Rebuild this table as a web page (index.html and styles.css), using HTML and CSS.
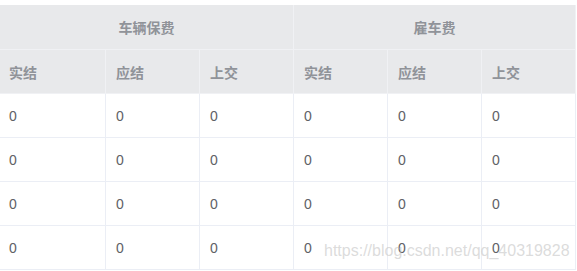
FILE: index.html
```html
<!DOCTYPE html>
<html lang="zh">
<head>
<meta charset="utf-8">
<link rel="stylesheet" href="styles.css">
</head>
<body>
<div class="wrap">
  <table class="grid">
    <colgroup>
      <col class="c-first">
      <col class="c"><col class="c"><col class="c"><col class="c"><col class="c">
    </colgroup>
    <thead>
      <tr class="head-top">
        <th colspan="3" class="group">车辆保费</th>
        <th colspan="3" class="group">雇车费</th>
      </tr>
      <tr class="head-sub">
        <th class="first">实结</th><th>应结</th><th>上交</th>
        <th>实结</th><th>应结</th><th>上交</th>
      </tr>
    </thead>
    <tbody>
      <tr><td class="first">0</td><td>0</td><td>0</td><td>0</td><td>0</td><td>0</td></tr>
      <tr><td class="first">0</td><td>0</td><td>0</td><td>0</td><td>0</td><td>0</td></tr>
      <tr><td class="first">0</td><td>0</td><td>0</td><td>0</td><td>0</td><td>0</td></tr>
      <tr><td class="first">0</td><td>0</td><td>0</td><td>0</td><td>0</td><td>0</td></tr>
    </tbody>
  </table>
  <div class="watermark">https://blog.csdn.net/qq_40319828</div>
</div>
</body>
</html>
```

FILE: styles.css
```css
html, body {
  margin: 0;
  padding: 0;
  background: #ffffff;
}
.wrap {
  position: relative;
  padding-top: 5px;
  font-family: "Liberation Sans", "Noto Sans CJK SC", sans-serif;
  font-size: 14px;
}
.grid {
  border-collapse: separate;
  border-spacing: 0;
  table-layout: fixed;
  width: 576px;
}
.c-first { width: 106px; }
.c { width: 94px; }
.grid th, .grid td {
  padding: 0 0 0 10px;
  text-align: left;
  vertical-align: middle;
  border-right: 1px solid #ebeef5;
  border-bottom: 1px solid #ebeef5;
  box-sizing: border-box;
}
.grid th {
  background: #e8e9eb;
  color: #909399;
  font-weight: bold;
  font-family: "Noto Sans CJK SC", sans-serif;
  border-color: #f0f1f4;
  height: 44px;
}
.grid .head-top th {
  height: 45px;
  text-align: center;
  padding: 0;
}
.grid td {
  color: #606266;
  height: 44px;
}
.grid .first {
  padding-left: 9px;
}
.watermark {
  position: absolute;
  left: 324px;
  top: 242px;
  font-family: "Liberation Sans", sans-serif;
  font-size: 16px;
  color: rgba(190, 190, 190, 0.55);
  white-space: nowrap;
}
```
